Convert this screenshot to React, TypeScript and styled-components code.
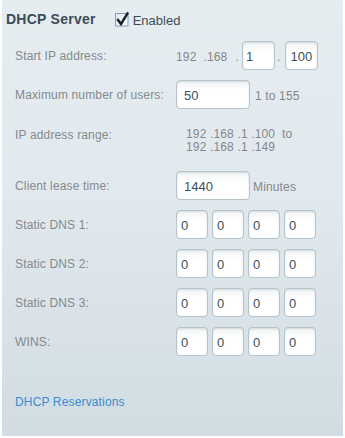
import React from "react";
import styled, { createGlobalStyle } from "styled-components";

const GlobalStyle = createGlobalStyle`
  html, body { margin: 0; padding: 0; background: #ffffff; }
  * { box-sizing: border-box; }
`;

const Panel = styled.div`
  margin-left: 2px;
  width: 341px;
  height: 436px;
  padding-top: 8px;
  background: linear-gradient(180deg, #e6edf1 0%, #e1e9ee 45%, #d1dce3 100%);
  font-family: "Liberation Sans", Arial, sans-serif;
`;

const Header = styled.div`
  display: flex;
  align-items: center;
  height: 22px;
  padding-left: 4px;
`;

const Title = styled.span`
  font-size: 14px;
  font-weight: bold;
  color: #3b4c59;
  letter-spacing: 0.25px;
`;

const CheckWrap = styled.label`
  display: flex;
  align-items: center;
  gap: 4px;
  margin-left: 19px;
  padding-top: 2px;
  font-size: 13px;
  color: #3b4c59;
`;

const Form = styled.div`
  display: grid;
  grid-template-columns: 161px 1fr;
  row-gap: 10px;
  margin-top: 11px;
  padding-left: 13px;
`;

const Label = styled.div<{ $top?: boolean }>`
  font-size: 12px;
  letter-spacing: 0.15px;
  color: #86898d;
  line-height: 13px;
  align-self: ${(p) => (p.$top ? "start" : "center")};
  padding-top: ${(p) => (p.$top ? "10px" : "2px")};
`;

const Controls = styled.div`
  display: flex;
  align-items: center;
  height: 29px;
`;

const Field = styled.input<{ $w: number; $pad: number; $ml?: number }>`
  width: ${(p) => p.$w}px;
  height: 29px;
  margin: 0 0 0 ${(p) => p.$ml ?? 0}px;
  padding: 1px 0 0 ${(p) => p.$pad}px;
  border: 1px solid #b4c4ca;
  border-radius: 4px;
  background: linear-gradient(180deg, #f1f4f5 0%, #ffffff 35%, #ffffff 100%);
  box-shadow: inset 0 1px 2px rgba(80, 100, 110, 0.18);
  font-family: "Liberation Sans", Arial, sans-serif;
  font-size: 13px;
  color: #3b505d;
  outline: none;
`;

const Text = styled.span<{ $ml?: number }>`
  margin-left: ${(p) => p.$ml ?? 0}px;
  padding-top: 2px;
  font-size: 12px;
  letter-spacing: 0.15px;
  color: #83878b;
  white-space: pre;
`;

const Range = styled.div`
  padding: 9px 0 7px 10px;
  font-size: 12px;
  line-height: 13px;
  letter-spacing: 0.15px;
  color: #83878b;
  white-space: pre;
`;

const Link = styled.a`
  display: block;
  margin-top: 40px;
  padding-left: 13px;
  font-size: 12px;
  line-height: 13px;
  letter-spacing: 0.15px;
  color: #3a8dd0;
  text-decoration: none;
`;

const CheckIcon = () => (
  <svg width="14" height="16" viewBox="0 0 14 16" style={{ display: "block", marginTop: -2 }}>
    <defs>
      <linearGradient id="cbg" x1="0" y1="0" x2="1" y2="1">
        <stop offset="0" stopColor="#dfe6ec" />
        <stop offset="1" stopColor="#ffffff" />
      </linearGradient>
    </defs>
    <rect x="0.5" y="2.5" width="12.5" height="12.5" fill="url(#cbg)" stroke="#7f9fbd" strokeWidth="1" />
    <path d="M3 9 L6 13 L12.5 2.5" fill="none" stroke="#15222e" strokeWidth="2.4" strokeLinecap="square" strokeLinejoin="miter" />
  </svg>
);

const quad = (key: string) => (
  <Controls key={key}>
    <Field $w={32} $pad={4} defaultValue="0" />
    <Field $w={32} $pad={4} $ml={4} defaultValue="0" />
    <Field $w={32} $pad={4} $ml={4} defaultValue="0" />
    <Field $w={32} $pad={4} $ml={4} defaultValue="0" />
  </Controls>
);

export default function App() {
  return (
    <>
      <GlobalStyle />
      <Panel>
        <Header>
          <Title>DHCP Server</Title>
          <CheckWrap>
            <CheckIcon />
            Enabled
          </CheckWrap>
        </Header>
        <Form>
          <Label>Start IP address:</Label>
          <Controls>
            <Text>192</Text>
            <Text $ml={7}>.168</Text>
            <Text $ml={8}>.</Text>
            <Field $w={33} $pad={3} $ml={3} defaultValue="1" />
            <Text $ml={2}>.</Text>
            <Field $w={33} $pad={4} $ml={5} defaultValue="100" />
          </Controls>

          <Label>Maximum number of users:</Label>
          <Controls>
            <Field $w={74} $pad={7} defaultValue="50" />
            <Text $ml={5}>1 to 155</Text>
          </Controls>

          <Label $top>IP address range:</Label>
          <Range>
            {"192 .168 .1 .100  to\n192 .168 .1 .149"}
          </Range>

          <Label>Client lease time:</Label>
          <Controls>
            <Field $w={74} $pad={7} defaultValue="1440" />
            <Text $ml={3}>Minutes</Text>
          </Controls>

          <Label>Static DNS 1:</Label>
          {quad("d1")}
          <Label>Static DNS 2:</Label>
          {quad("d2")}
          <Label>Static DNS 3:</Label>
          {quad("d3")}
          <Label>WINS:</Label>
          {quad("w")}
        </Form>
        <Link href="#">DHCP Reservations</Link>
      </Panel>
    </>
  );
}
